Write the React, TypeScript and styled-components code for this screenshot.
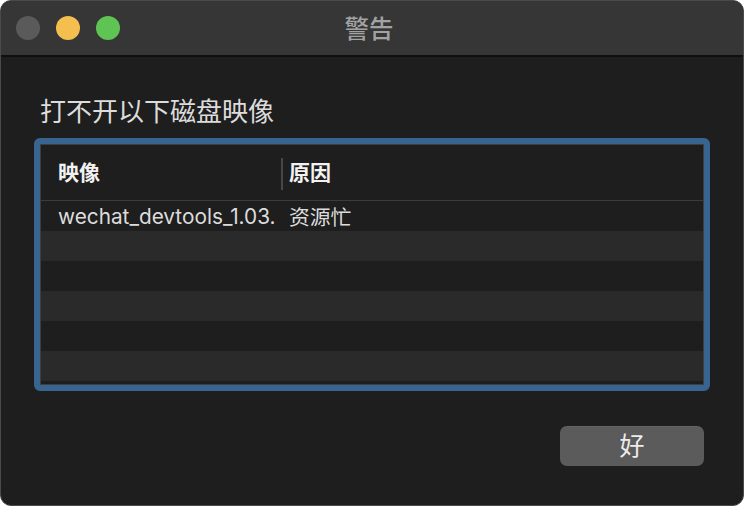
import React from "react";
import styled, { createGlobalStyle } from "styled-components";

const Global = createGlobalStyle`
  html, body { margin: 0; padding: 0; background: #ffffff; }
  body { width: 744px; height: 506px; overflow: hidden; }
  * { box-sizing: border-box; }
`;

const FONT = `Inter, "Noto Sans CJK SC", "Noto Sans", sans-serif`;

const Window = styled.div`
  width: 744px;
  height: 506px;
  border-radius: 11px;
  overflow: hidden;
  background: #1e1e1e;
  border: 1px solid #4a4a4a;
  display: flex;
  flex-direction: column;
  font-family: ${FONT};
`;

const TitleBar = styled.div`
  height: 56px;
  flex: none;
  background: #363636;
  border-bottom: 2px solid #0f0f0f;
  display: grid;
  grid-template-columns: 1fr auto 1fr;
  align-items: center;
  padding: 0 21px 0 15px;
`;

const Lights = styled.div`
  display: flex;
  gap: 16px;
  margin-top: -1px;
`;

const Light = styled.span<{ $c: string }>`
  width: 24px;
  height: 24px;
  border-radius: 50%;
  background: ${(p) => p.$c};
`;

const Title = styled.div`
  font-size: 24.5px;
  color: #a2a2a2;
  font-weight: 500;
  margin-top: -2px;
`;

const Body = styled.div`
  flex: 1;
  display: flex;
  flex-direction: column;
  padding: 40px 33px 0 33px;
`;

const Heading = styled.div`
  font-size: 26px;
  line-height: 30px;
  color: #dcdcdc;
  padding-left: 6px;
  margin-bottom: 11px;
`;

const TableFrame = styled.div`
  height: 253px;
  border: 6px solid #38648f;
  border-radius: 6px;
  display: flex;
`;

const TableInner = styled.div`
  flex: 1;
  border: 1px solid #3e3e3e;
  display: flex;
  flex-direction: column;
  background: #1e1e1e;
`;

const HeaderRow = styled.div`
  height: 56px;
  flex: none;
  border-bottom: 1px solid #3c3c3c;
  display: grid;
  grid-template-columns: 240px 1fr;
  align-items: center;
  padding-top: 2px;
`;

const HeaderCell = styled.div<{ $divider?: boolean }>`
  font-size: 21px;
  font-weight: 700;
  color: #f2f2f2;
  padding-left: ${(p) => (p.$divider ? "6px" : "17px")};
  height: 32px;
  line-height: 30px;
  border-left: ${(p) => (p.$divider ? "2px solid #474747" : "none")};
`;

const Row = styled.div<{ $alt: boolean }>`
  height: 30px;
  flex: none;
  display: grid;
  grid-template-columns: 240px 1fr;
  align-items: center;
  background: ${(p) => (p.$alt ? "#2a2a2a" : "#1e1e1e")};
`;

const Cell = styled.div<{ $second?: boolean }>`
  font-size: 20.8px;
  color: #dcdcdc;
  white-space: nowrap;
  overflow: hidden;
  padding-left: ${(p) => (p.$second ? "8px" : "17px")};
`;

const Footer = styled.div`
  display: flex;
  justify-content: flex-end;
  padding: 35px 6px 0 0;
`;

const Button = styled.button`
  width: 144px;
  height: 40px;
  border: none;
  border-radius: 7px;
  background: #5b5b5b;
  color: #ececec;
  font-family: ${FONT};
  font-size: 25px;
  line-height: 40px;
  padding: 0;
  box-shadow: inset 0 1px 0 rgba(255, 255, 255, 0.06);
`;

const rows = [
  ["wechat_devtools_1.03.", "资源忙"],
  ["", ""],
  ["", ""],
  ["", ""],
  ["", ""],
  ["", ""],
];

export default function App() {
  return (
    <>
      <Global />
      <Window>
        <TitleBar>
          <Lights>
            <Light $c="#5a5a5a" />
            <Light $c="#f4bf4f" />
            <Light $c="#5fc454" />
          </Lights>
          <Title>警告</Title>
          <div />
        </TitleBar>
        <Body>
          <Heading>打不开以下磁盘映像</Heading>
          <TableFrame>
            <TableInner>
              <HeaderRow>
                <HeaderCell>映像</HeaderCell>
                <HeaderCell $divider>原因</HeaderCell>
              </HeaderRow>
              {rows.map((r, i) => (
                <Row key={i} $alt={i % 2 === 1}>
                  <Cell>{r[0]}</Cell>
                  <Cell $second>{r[1]}</Cell>
                </Row>
              ))}
            </TableInner>
          </TableFrame>
          <Footer>
            <Button>好</Button>
          </Footer>
        </Body>
      </Window>
    </>
  );
}
